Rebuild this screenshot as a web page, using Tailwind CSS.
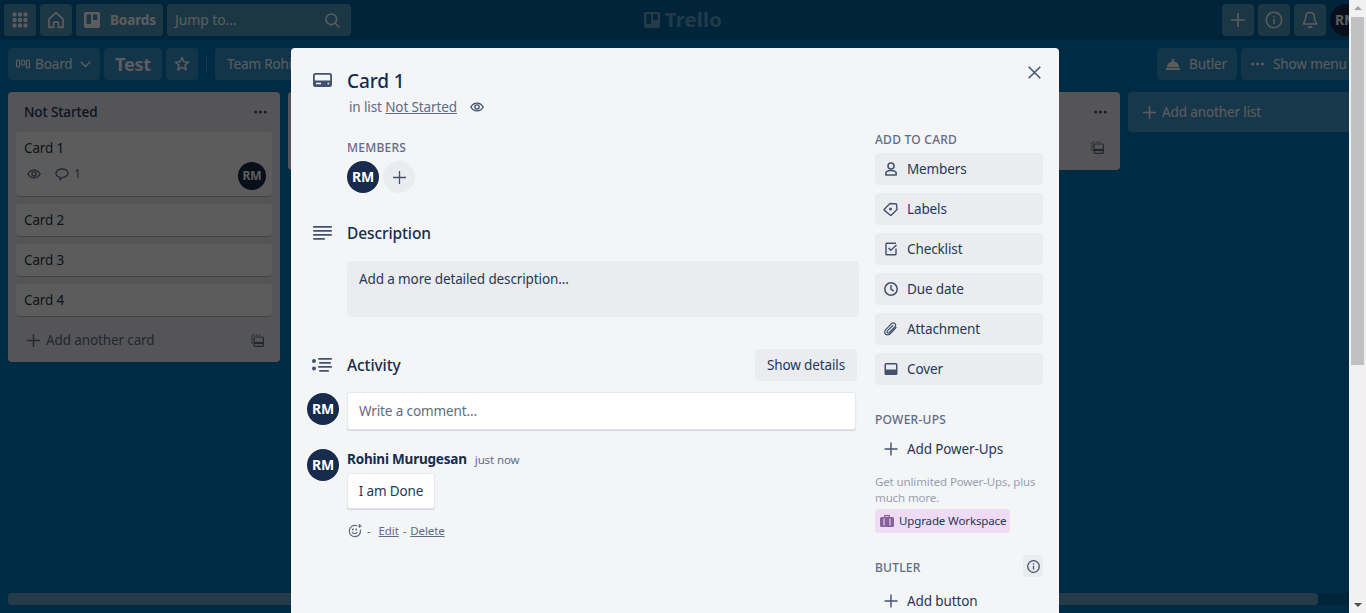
<!DOCTYPE html>
<html lang="en">
<head>
  <meta charset="UTF-8" />
  <title>Card 1 | Trello</title>
  <script src="https://cdn.jsdelivr.net/npm/@tailwindcss/browser@4"></script>
</head>
<body class="font-['Noto_Sans',sans-serif] text-[13.5px] tracking-[-0.12px] text-[#253858]">
<div class="relative w-[1366px] h-[613px] overflow-hidden bg-[#0079bf] flex flex-col">

  <!-- Top nav -->
  <header class="relative h-10 shrink-0 bg-[#0067a3] flex items-center gap-1 px-1 text-white">
    <button class="w-8 h-8 rounded bg-white/30 flex items-center justify-center">
      <svg width="16" height="16" viewBox="0 0 16 16" fill="currentColor"><rect x="0.5" y="0.5" width="4" height="4" rx="1.2"/><rect x="6" y="0.5" width="4" height="4" rx="1.2"/><rect x="11.5" y="0.5" width="4" height="4" rx="1.2"/><rect x="0.5" y="6" width="4" height="4" rx="1.2"/><rect x="6" y="6" width="4" height="4" rx="1.2"/><rect x="11.5" y="6" width="4" height="4" rx="1.2"/><rect x="0.5" y="11.5" width="4" height="4" rx="1.2"/><rect x="6" y="11.5" width="4" height="4" rx="1.2"/><rect x="11.5" y="11.5" width="4" height="4" rx="1.2"/></svg>
    </button>
    <button class="w-8 h-8 rounded bg-white/30 flex items-center justify-center">
      <svg width="18" height="18" viewBox="0 0 18 18" fill="none" stroke="currentColor" stroke-width="1.7" stroke-linejoin="round"><path d="M2 8.2 9 1.6l7 6.6V16.4h-4.6v-5.2H6.6v5.2H2z"/></svg>
    </button>
    <button class="w-[87px] h-8 rounded bg-white/30 flex items-center pl-2 gap-[10px] font-bold">
      <svg width="16" height="16" viewBox="0 0 16 16" fill="currentColor"><path fill-rule="evenodd" d="M2 0h12a2 2 0 0 1 2 2v12a2 2 0 0 1-2 2H2a2 2 0 0 1-2-2V2a2 2 0 0 1 2-2zm0.5 2.500v9.500h4.500V2.500zm6.500 0v5.500h4.500V2.500z"/></svg>
      Boards
    </button>
    <div class="w-[184px] h-8 rounded bg-white/30 flex items-center justify-between pl-2 pr-[11px] text-sm">
      <span>Jump to...</span>
      <svg width="15" height="15" viewBox="0 0 15 15" fill="none" stroke="currentColor" stroke-width="1.6" stroke-linecap="round"><circle cx="6.300" cy="6.300" r="5.300"/><path d="M10.200 10.200 14 14"/></svg>
    </div>
    <div class="absolute inset-0 flex items-center justify-center gap-[5px] text-white/40 font-bold text-[20px] tracking-[0.3px]">
      <svg width="16" height="16" viewBox="0 0 16 16" fill="currentColor"><path fill-rule="evenodd" d="M2 0h12a2 2 0 0 1 2 2v12a2 2 0 0 1-2 2H2a2 2 0 0 1-2-2V2a2 2 0 0 1 2-2zm0.500 2v10h4.500V2zm6.500 0v6h4.500V2z"/></svg>
      Trello
    </div>
    <button class="ml-auto w-8 h-8 rounded bg-white/30 flex items-center justify-center">
      <svg width="16" height="16" viewBox="0 0 16 16" stroke="currentColor" stroke-width="1.700"><path d="M8 1v14M1 8h14"/></svg>
    </button>
    <button class="w-8 h-8 rounded bg-white/30 flex items-center justify-center">
      <svg width="18" height="18" viewBox="0 0 18 18" fill="none" stroke="currentColor" stroke-width="1.500"><circle cx="9" cy="9" r="7.700"/><path d="M9 8v5M9 4.800v1.600"/></svg>
    </button>
    <button class="w-8 h-8 rounded bg-white/30 flex items-center justify-center">
      <svg width="16" height="18" viewBox="0 0 16 18" fill="none" stroke="currentColor" stroke-width="1.500" stroke-linejoin="round"><path d="M8 1.500c-2.700 0-4.300 2-4.300 4.500 0 4-2.200 6.300-2.200 7h13c0-.7-2.200-3-2.200-7 0-2.500-1.600-4.500-4.300-4.500z"/><path d="M6 15.500c.5 1 3.500 1 4 0" stroke-width="1.700"/></svg>
    </button>
    <div class="w-8 h-8 rounded-full bg-[#172b4d] flex items-center justify-center font-bold text-sm">RM</div>
  </header>

  <!-- Board bar -->
  <div class="h-8 mt-2 mx-2 shrink-0 flex items-center gap-1 text-white">
    <button class="w-[92px] h-8 rounded bg-white/20 flex items-center pl-2">
      <svg width="14" height="12" viewBox="0 0 14 12" fill="none" stroke="currentColor" stroke-width="1.200"><rect x="0.600" y="2" width="3" height="7" rx="1"/><rect x="5.500" y="2" width="3" height="5" rx="1"/><rect x="10.400" y="2" width="3" height="8" rx="1"/></svg>
      <span class="ml-[5px]">Board</span>
      <svg class="ml-[7px]" width="11" height="7" viewBox="0 0 11 7" fill="none" stroke="currentColor" stroke-width="1.500"><path d="m0.800 0.800 4.700 4.700 4.700-4.700"/></svg>
    </button>
    <button class="w-[58px] h-8 rounded bg-white/20 font-bold text-lg tracking-[-0.2px]">Test</button>
    <button class="w-8 h-8 rounded bg-white/20 flex items-center justify-center">
      <svg width="16" height="16" viewBox="0 0 16 16" fill="none" stroke="currentColor" stroke-width="1.600" stroke-linejoin="round"><path d="m8 1.500 1.900 4.300 4.600.4-3.500 3 1.100 4.600L8 11.400l-4.100 2.400L5 9.200l-3.500-3 4.600-.4z"/></svg>
    </button>
    <div class="w-px h-4 bg-white/25 mx-[3.5px]"></div>
    <button class="w-[200px] h-8 rounded bg-white/20 text-left pl-3 ml-px whitespace-nowrap">Team Rohini</button>
    <button class="ml-auto w-20 h-8 rounded bg-white/20 flex items-center pl-[9px] gap-[9px]">
      <svg width="14" height="14" viewBox="0 0 14 14" fill="currentColor"><path d="M1 10.200a6 6 0 0 1 5.300-6V3.200h-.7V2h2.800v1.200h-.7v1a6 6 0 0 1 5.300 6z"/><rect x="0" y="11" width="14" height="2" rx=".7"/></svg>
      Butler
    </button>
    <button class="w-[117px] h-8 rounded bg-white/20 flex items-center pl-[10px] gap-[9px] whitespace-nowrap">
      <svg width="13" height="4" viewBox="0 0 13 4" fill="currentColor"><circle cx="1.700" cy="2" r="1.500"/><circle cx="6.500" cy="2" r="1.500"/><circle cx="11.300" cy="2" r="1.500"/></svg>
      Show menu
    </button>
  </div>

  <!-- Lists -->
  <main class="flex-1 min-h-0 mt-3 pl-2 flex items-start gap-2">
    <section class="w-[272px] shrink-0 rounded bg-[#ebecf0]">
      <div class="h-10 flex items-center justify-between pl-4 pr-[13px] font-medium">
        Not Started
        <svg width="13" height="4" viewBox="0 0 13 4" fill="#42526e"><circle cx="1.700" cy="2" r="1.500"/><circle cx="6.500" cy="2" r="1.500"/><circle cx="11.300" cy="2" r="1.500"/></svg>
      </div>
      <div class="px-2 flex flex-col gap-2">
        <div class="relative h-16 rounded bg-white shadow-[0_1px_0_#091e4240] px-2 pt-[6px]">
          <div class="leading-5">Card 1</div>
          <div class="flex items-center mt-2 pl-[3px] text-[#5e6c84] text-xs">
            <svg width="14" height="12" viewBox="0 0 14 12" fill="none" stroke="currentColor" stroke-width="1.300"><path d="M.8 6C3.800.8 10.200.8 13.200 6 10.200 11.200 3.800 11.200.8 6z"/><circle cx="7" cy="6" r="2.100"/></svg>
            <svg class="ml-[14px]" width="14" height="13" viewBox="0 0 14 13" fill="none" stroke="currentColor" stroke-width="1.300" stroke-linejoin="round"><path d="M7 1c3.300 0 6 1.700 6 4.200S10.300 9.400 7.500 9.400L5 11.800V9.200C2.800 8.800 1 7.400 1 5.200 1 2.700 3.700 1 7 1z"/></svg>
            <span class="ml-[5px]">1</span>
          </div>
          <div class="absolute right-[6px] bottom-[6px] w-7 h-7 rounded-full bg-[#172b4d] text-white font-bold text-xs flex items-center justify-center">RM</div>
        </div>
        <div class="h-8 rounded bg-white shadow-[0_1px_0_#091e4240] px-2 flex items-center">Card 2</div>
        <div class="h-8 rounded bg-white shadow-[0_1px_0_#091e4240] px-2 flex items-center">Card 3</div>
        <div class="h-8 rounded bg-white shadow-[0_1px_0_#091e4240] px-2 flex items-center">Card 4</div>
      </div>
      <div class="h-[46px] pt-[3px] flex items-center pl-[19px] pr-4 text-[#5e6c84]">
        <svg width="13" height="13" viewBox="0 0 13 13" stroke="currentColor" stroke-width="1.500"><path d="M6.500 0v13M0 6.500h13"/></svg>
        <span class="ml-[6px]">Add another card</span>
        <svg class="ml-auto" width="13" height="13" viewBox="0 0 13 13" fill="none" stroke="currentColor" stroke-width="1.200"><path d="M1 9.500V1.600C1 1.200 1.200 1 1.600 1h8" stroke-dasharray="2 1"/><rect x="3" y="3" width="9.400" height="9.400" rx="1"/><path d="M3 9h9.400" stroke-width="2.200"/></svg>
      </div>
    </section>
    <section class="w-[272px] h-[78px] shrink-0 rounded bg-[#ebecf0]"></section>
    <section class="w-[272px] h-[78px] shrink-0 rounded bg-[#ebecf0]"></section>
    <section class="w-[272px] h-[78px] shrink-0 rounded bg-[#ebecf0] flex flex-col items-end justify-between pt-[18px] pb-[16px] pr-[16px] text-[#5e6c84]">
      <svg class="-mr-[3px]" width="13" height="4" viewBox="0 0 13 4" fill="#42526e"><circle cx="1.700" cy="2" r="1.500"/><circle cx="6.500" cy="2" r="1.500"/><circle cx="11.300" cy="2" r="1.500"/></svg>
      <svg width="13" height="13" viewBox="0 0 13 13" fill="none" stroke="currentColor" stroke-width="1.200"><path d="M1 9.500V1.600C1 1.200 1.200 1 1.600 1h8" stroke-dasharray="2 1"/><rect x="3" y="3" width="9.400" height="9.400" rx="1"/><path d="M3 9h9.400" stroke-width="2.200"/></svg>
    </section>
    <section class="w-[272px] h-10 shrink-0 rounded bg-white/25 flex items-center pl-[15px] text-white">
      <svg width="13" height="13" viewBox="0 0 13 13" stroke="currentColor" stroke-width="1.500"><path d="M6.500 0v13M0 6.500h13"/></svg>
      <span class="ml-[6px]">Add another list</span>
    </section>
  </main>

  <!-- Board horizontal scrollbar -->
  <div class="h-3 mx-2 mb-2 shrink-0 rounded bg-black/15">
    <div class="w-[1310px] h-3 rounded bg-white/40"></div>
  </div>

  <!-- Dimmed overlay with card dialog -->
  <div class="absolute inset-0 bg-black/64">
    <div class="absolute left-[291px] top-12 w-[768px] h-[640px] rounded-t bg-[#f4f5f7] p-4 pt-[21px]">
      <svg class="absolute left-[22px] top-[25px] text-[#42526e]" width="19" height="14" viewBox="0 0 19 14" fill="currentColor"><path fill-rule="evenodd" d="M2.500 0h14A2.500 2.500 0 0 1 19 2.500v9a2.500 2.500 0 0 1-2.500 2.500h-14A2.500 2.500 0 0 1 0 11.500v-9A2.500 2.500 0 0 1 2.500 0zm0 1.800a.7.7 0 0 0-.7.700v5h15.400v-5a.7.7 0 0 0-.7-.7zM3 9.800v1.500h5V9.800zm11.500 0v1.500h1.700V9.800z"/></svg>
      <button class="absolute right-[18px] top-[18px] text-[#42526e]" aria-label="Close">
        <svg class="block" width="13" height="13" viewBox="0 0 13 13" stroke="currentColor" stroke-width="1.500"><path d="m.7.7 11.600 11.600M12.300.7.700 12.300"/></svg>
      </button>

      <div class="pl-10">
        <h2 class="text-[19px] leading-6 font-medium tracking-[-0.1px] text-[#172b4d]">Card 1</h2>
        <div class="mt-1 h-5 pl-[2px] flex items-center text-[#5e6c84]">
          in list&nbsp;<u>Not Started</u>
          <svg class="ml-[13px]" width="14" height="12" viewBox="0 0 14 12" fill="none" stroke="#42526e" stroke-width="1.400"><path d="M.8 6C3.800.8 10.200.8 13.200 6 10.200 11.200 3.800 11.200.8 6z"/><circle cx="7" cy="6" r="2.100"/></svg>
        </div>
      </div>

      <div class="flex gap-4">
        <!-- Main column -->
        <div class="w-[552px] shrink-0">
          <div class="pl-10 mt-[21px]">
            <div class="h-5 text-xs font-medium tracking-[0.25px] text-[#5e6c84] flex items-center">MEMBERS</div>
            <div class="mt-[3px] flex gap-1">
              <div class="w-8 h-8 rounded-full bg-[#172b4d] text-white font-bold text-sm flex items-center justify-center">RM</div>
              <div class="w-8 h-8 rounded-full bg-[#ebecf0] text-[#42526e] flex items-center justify-center">
                <svg width="13" height="13" viewBox="0 0 13 13" stroke="currentColor" stroke-width="1.300"><path d="M6.500 0v13M0 6.500h13"/></svg>
              </div>
            </div>
          </div>

          <div class="mt-7 h-6 flex items-center">
            <svg class="ml-[6px] text-[#42526e]" width="19" height="14" viewBox="0 0 19 14" fill="currentColor"><rect y="0" width="19" height="1.700" rx=".8"/><rect y="4" width="19" height="1.700" rx=".8"/><rect y="8" width="19" height="1.700" rx=".8"/><rect y="12" width="12" height="1.700" rx=".8"/></svg>
            <h3 class="ml-[15px] mt-[2px] text-[15.5px] tracking-[-0.1px] font-medium text-[#172b4d]">Description</h3>
          </div>
          <div class="mt-4 ml-10 h-14 rounded bg-[#ebecf0] px-3 py-2 leading-5">Add a more detailed description...</div>

          <div class="mt-8 h-8 flex items-center">
            <svg class="ml-[5px] text-[#42526e]" width="20" height="14" viewBox="0 0 20 14" fill="currentColor"><circle cx="2" cy="3" r="2"/><circle cx="2" cy="10.500" r="2"/><rect x="6" y="0" width="14" height="1.700" rx=".8"/><rect x="7" y="4" width="12" height="1.700" rx=".8"/><rect x="6" y="8" width="14" height="1.700" rx=".8"/><rect x="7" y="12" width="10" height="1.700" rx=".8"/></svg>
            <h3 class="ml-[15px] mt-[2px] text-[15.5px] tracking-[-0.1px] font-medium text-[#172b4d]">Activity</h3>
            <button class="ml-auto mr-[2px] w-[102px] h-8 rounded bg-[#ebecf0]">Show details</button>
          </div>

          <div class="mt-[11px] flex">
            <div class="mt-px w-8 h-8 rounded-full bg-[#172b4d] text-white font-bold text-sm flex items-center justify-center">RM</div>
            <div class="ml-2 w-[509px] h-[38px] rounded-[3px] bg-white border border-[#e6e8ec] shadow-[0_1px_1px_#091e4226] px-[11px] flex items-center text-[#5e6c84]">Write a comment...</div>
          </div>

          <div class="mt-[19px] flex">
            <div class="w-8 h-8 rounded-full bg-[#172b4d] text-white font-bold text-sm flex items-center justify-center">RM</div>
            <div class="ml-2">
              <div class="h-5 flex items-center">
                <span class="font-bold tracking-[-0.2px] text-[#172b4d]">Rohini Murugesan</span>
                <span class="ml-2 mt-[2px] text-[11.5px] text-[#5e6c84]">just now</span>
              </div>
              <div class="mt-1 w-[88px] h-9 rounded-[3px] bg-white border border-[#e6e8ec] shadow-[0_1px_1px_#091e4226] flex items-center justify-center">I am Done</div>
              <div class="mt-[14px] h-4 flex items-center text-[11.5px] text-[#5e6c84]">
                <svg class="ml-px" width="14" height="14" viewBox="0 0 14 14" fill="none" stroke="currentColor" stroke-width="1.200" stroke-linecap="round"><path d="M8.500 1.700A5.600 5.600 0 1 0 12.400 6"/><path d="M4.300 8.300c1 1.800 3.700 1.800 4.700 0"/><path d="M4.800 5.500h.1M8.200 5.500h.1" stroke-width="1.800"/><path d="M11.700.5v3M10.200 2h3"/></svg>
                <span class="ml-[5px]">-</span>
                <u class="ml-2">Edit</u>
                <span class="mx-1">-</span>
                <u>Delete</u>
              </div>
            </div>
          </div>
        </div>

        <!-- Sidebar -->
        <aside class="w-[168px] shrink-0 pt-[15px]">
          <div class="h-4 text-xs font-medium tracking-[0.25px] text-[#5e6c84] flex items-center">ADD TO CARD</div>
          <div class="mt-[5px] flex flex-col gap-2">
            <button class="h-8 rounded bg-[#ebecf0] flex items-center pl-2 gap-2">
              <svg class="w-4 text-[#42526e]" height="14" viewBox="0 0 16 14" fill="none" stroke="currentColor" stroke-width="1.500"><circle cx="8" cy="4" r="3"/><path d="M2.800 13v-1.500C2.800 9.500 5 8.500 8 8.500s5.200 1 5.200 3V13z" stroke-linejoin="round"/></svg>
              Members
            </button>
            <button class="h-8 rounded bg-[#ebecf0] flex items-center pl-2 gap-2">
              <svg class="w-4 text-[#42526e]" height="14" viewBox="0 0 16 14" fill="none" stroke="currentColor" stroke-width="1.400" stroke-linejoin="round"><path d="M1.500 7 7 1.500 13.500 2l.5 5.500-5.500 5.500a1 1 0 0 1-1.400 0L1.500 8.400a1 1 0 0 1 0-1.400z"/><circle cx="7.500" cy="7" r="1.500" fill="currentColor" stroke="none"/></svg>
              Labels
            </button>
            <button class="h-8 rounded bg-[#ebecf0] flex items-center pl-2 gap-2">
              <svg class="w-4 text-[#42526e]" height="14" viewBox="0 0 16 14" fill="none" stroke="currentColor" stroke-width="1.400"><path d="M13 6.500V12a.8.8 0 0 1-.8.8H3.800A.8.800 0 0 1 3 12V2a.8.800 0 0 1 .8-.8H13"/><path d="m5.500 6 2.300 2.300L13.500 3"/></svg>
              Checklist
            </button>
            <button class="h-8 rounded bg-[#ebecf0] flex items-center pl-2 gap-2">
              <svg class="w-4 text-[#42526e]" height="14" viewBox="0 0 16 14" fill="none" stroke="currentColor" stroke-width="1.500"><circle cx="8" cy="7" r="6.200"/><path d="M8 3v4.200l2.600 2"/></svg>
              Due date
            </button>
            <button class="h-8 rounded bg-[#ebecf0] flex items-center pl-2 gap-2">
              <svg class="w-4 text-[#42526e]" height="14" viewBox="0 0 16 14" fill="none" stroke="currentColor" stroke-width="1.200" stroke-linecap="round"><path d="M13 5.500 7.500 11.500c-1.500 1.700-3.800 1.700-5 .5s-1-3 .5-4.600L8.500 1.700c1-1 2.500-1 3.400-.1s.9 2.200-.1 3.300L6.300 10.500c-.6.600-1.400.6-1.900.1s-.4-1.300.2-1.900L9.800 3.500"/></svg>
              Attachment
            </button>
            <button class="h-8 rounded bg-[#ebecf0] flex items-center pl-2 gap-2">
              <svg class="w-4 text-[#42526e]" height="14" viewBox="0 0 16 14" fill="currentColor"><path fill-rule="evenodd" d="M3 1h10a1.500 1.500 0 0 1 1.500 1.500v9A1.500 1.500 0 0 1 13 13H3a1.500 1.500 0 0 1-1.500-1.500v-9A1.500 1.500 0 0 1 3 1zm0 1.500v5h10v-5z"/></svg>
              Cover
            </button>
          </div>

          <div class="mt-[27px] h-4 text-xs font-medium tracking-[0.25px] text-[#5e6c84] flex items-center">POWER-UPS</div>
          <button class="mt-[5px] h-8 w-full flex items-center pl-2 gap-2">
            <svg class="w-4 text-[#42526e]" height="14" viewBox="0 0 16 14" stroke="currentColor" stroke-width="1.400"><path d="M8 .5v13M1.500 7h13"/></svg>
            Add Power-Ups
          </button>
          <p class="mt-[9px] text-[11.5px] leading-4 text-[#97a0af]">Get unlimited Power-Ups, plus much more.</p>
          <button class="mt-[3px] w-[135px] h-6 rounded bg-[#efdbf3] flex items-center pl-[5px] gap-[5px] text-[11.5px] whitespace-nowrap">
            <svg class="shrink-0 text-[#89609e]" width="14" height="12" viewBox="0 0 14 12" fill="currentColor"><path fill-rule="evenodd" d="M5 0h4a1 1 0 0 1 1 1v1h2.500A1.500 1.500 0 0 1 14 3.500v7a1.500 1.500 0 0 1-1.500 1.500h-11A1.500 1.500 0 0 1 0 10.500v-7A1.500 1.500 0 0 1 1.500 2H4V1a1 1 0 0 1 1-1zm.3 1.300V2h3.400v-.7zM3.500 3.500v7h1v-7zm6 0v7h1v-7z"/></svg>
            Upgrade Workspace
          </button>

          <div class="mt-[22px] flex items-center justify-between h-[22px]">
            <span class="mt-1 text-xs font-medium tracking-[0.25px] text-[#5e6c84]">BUTLER</span>
            <button class="w-5 h-[22px] rounded bg-[#ebecf0] flex items-center justify-center">
              <svg width="13" height="13" viewBox="0 0 13 13" fill="none" stroke="#42526e" stroke-width="1.300"><circle cx="6.500" cy="6.500" r="5.800"/><path d="M6.500 5.800v3.700M6.500 3.200v1.300"/></svg>
            </button>
          </div>
          <button class="mt-2 h-8 w-full flex items-center pl-2 gap-2">
            <svg class="w-4 text-[#42526e]" height="14" viewBox="0 0 16 14" stroke="currentColor" stroke-width="1.400"><path d="M8 .5v13M1.500 7h13"/></svg>
            Add button
          </button>
        </aside>
      </div>
    </div>
  </div>

  <!-- Window scrollbar -->
  <div class="absolute right-0 top-0 bottom-0 w-[17px] bg-[#f1f1f1]">
    <div class="absolute left-1/2 -translate-x-1/2 top-[6px] w-0 h-0 border-x-[4px] border-x-transparent border-b-[4px] border-b-[#a3a3a3]"></div>
    <div class="absolute left-[2px] top-[17px] w-[13px] h-[348px] bg-[#c1c1c1]"></div>
    <div class="absolute left-1/2 -translate-x-1/2 bottom-[6px] w-0 h-0 border-x-[4px] border-x-transparent border-t-[4px] border-t-[#505050]"></div>
  </div>
</div>
</body>
</html>
